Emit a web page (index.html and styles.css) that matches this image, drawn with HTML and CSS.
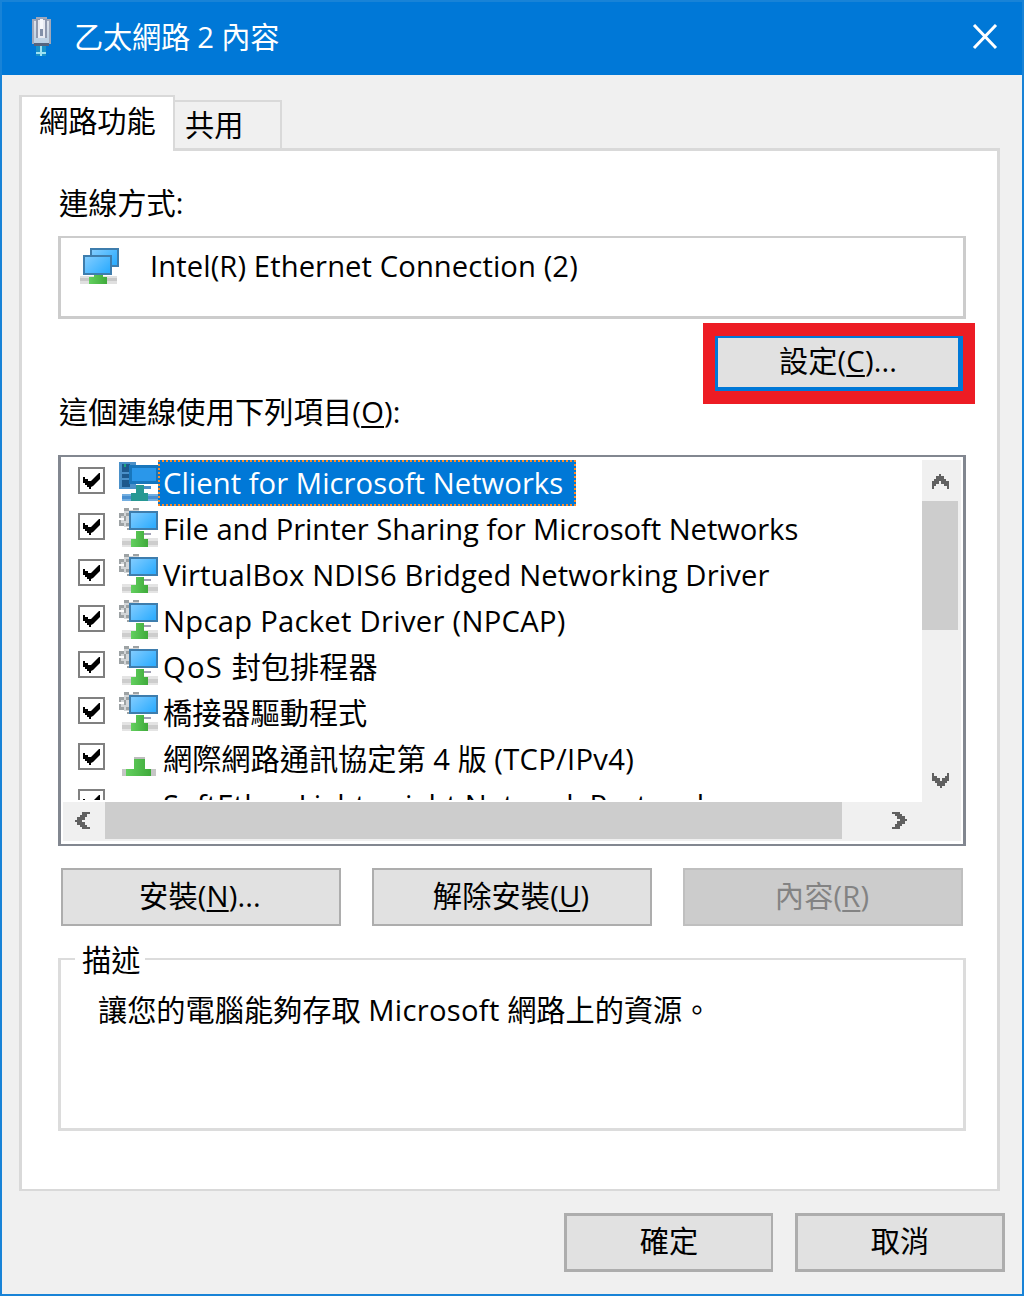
FILE: index.html
```html
<!DOCTYPE html>
<html lang="zh-Hant">
<head>
<meta charset="utf-8">
<title>乙太網路 2 內容</title>
<link rel="stylesheet" href="styles.css">
</head>
<body>
<svg class="defs" aria-hidden="true">
  <defs>
    <linearGradient id="screen" x1="0" y1="0" x2="1" y2="0.7">
      <stop offset="0" stop-color="#86ceff"/><stop offset="1" stop-color="#2fadff"/>
    </linearGradient>
    <linearGradient id="green" x1="0" y1="0" x2="1" y2="0">
      <stop offset="0" stop-color="#63d05f"/><stop offset="1" stop-color="#3faa3b"/>
    </linearGradient>
    <linearGradient id="plug" x1="0" y1="0" x2="0" y2="1">
      <stop offset="0" stop-color="#dde1ea"/><stop offset="1" stop-color="#b8cfe4"/>
    </linearGradient>
    <symbol id="check" viewBox="0 0 27 27">
      <path fill="#fff" stroke="#808080" stroke-width="2" d="M1 1h25v25H1z"/>
      <path d="M5 10h2v2h3v2h3l2-2 2-2 2-2 2-2h1v6l-2 2-2 2-3 3-2 1v2h-2v-2H9v-2H7v-2H5z"/>
    </symbol>
    <symbol id="service" viewBox="0 0 39 39">
      <path fill="#d3d6d8" d="M5 2h15v4h-9v13H5v-3H2v-4h3v-2H2V6h3z"/>
      <path fill="#9da2a4" d="M5 0h5v3H5zM14 0h6v2h-6zM0 5h5v3H2v2H0zM7 5h3v3H7zM0 12h2v3h3v3H0zM5 8h2v5H5zM7 15h3v3H7zM8 20h3v2H8z"/>
      <path fill="#e4e4e4" d="M3 30h36v9H3z"/>
      <path fill="#cdcdcd" d="M3 33h36v4H3z"/>
      <path fill="#a0a0b4" d="M17 25h15v2H17z"/>
      <path fill="url(#green)" d="M17 23h8v8h4v8H12v-8h5z"/>
      <path fill="url(#screen)" stroke="#3e7dad" stroke-width="2" d="M11 4h27v17H11z"/>
    </symbol>
    <symbol id="client" viewBox="0 0 39 39">
      <path fill="#4a90c9" d="M0 0h17v24h15v3H0z"/>
      <path fill="#1d588c" d="M3 2h8v8H3zM3 12h8v4H3zM3 18h8v7H3z"/>
      <path fill="#19a77d" d="M5 2h2v3H5z"/>
      <path fill="#72aee0" d="M3 32h36v7H3z"/>
      <path fill="#498fd0" d="M3 34h36v3H3z"/>
      <path fill="#279893" d="M17 23h8v8h4v8H12v-8h5z"/>
      <path fill="#2a97ea" stroke="#1876bc" stroke-width="3" d="M11 4h27v16H11z"/>
    </symbol>
    <symbol id="protocol" viewBox="0 0 39 39">
      <path fill="#c6c6c6" d="M3 31h34v7H3z"/>
      <path fill="#bcbcbc" d="M15 19h11v3H15z"/>
      <path fill="url(#green)" d="M15 21h11v10h6v7H7v-7h8z"/>
    </symbol>
    <symbol id="adapter" viewBox="0 0 40 38">
      <path fill="#e0e0e0" d="M0 28h37v8H0z"/>
      <path fill="#c8c8c8" d="M0 30h37v3H0z"/>
      <path fill="url(#green)" d="M9 29h5v-3h9v3h4v7H9z"/>
      <path fill="url(#screen)" stroke="#3e7dad" stroke-width="2" d="M11 1h27v17H11z"/>
      <path fill="url(#screen)" stroke="#3e7dad" stroke-width="2" d="M4 8h27v18H4z"/>
    </symbol>
    <symbol id="chevron" viewBox="0 0 17 15">
      <path fill="#606060" d="M7 0h2v2h3v3h2v2h3v8h-2v-3h-3v-2H9V7H7v3H4v2H2v3H0V7h2V5h2V2h3z"/>
    </symbol>
  </defs>
</svg>
<main class="dialog">
  <header class="titlebar">
    <svg class="title-icon" viewBox="0 0 19 39" shape-rendering="crispEdges">
      <path fill="#a0a8bb" d="M4 0h11v2h4v25H0V2h4z"/>
      <path fill="#56657f" d="M2 26h15v3H2z"/>
      <path fill="url(#plug)" d="M2 4h15v22H2z"/>
      <path fill="#8e98ae" d="M4 2h11v19H4z"/>
      <path fill="#e7eaf2" d="M6 3h7v18H6z"/>
      <path fill="#8290a9" d="M8 9h3v10H8z"/>
      <path fill="#f5f7fb" d="M8 2h3v10H8z"/>
      <path fill="#1b91c7" d="M4 29h10v10H4z"/>
      <path fill="#9ee2f3" d="M8 29h2v10H8zM4 35h10v2H4z"/>
    </svg>
    <h1 class="title">乙太網路 2 內容</h1>
    <svg class="close" viewBox="0 0 26 26"><path d="M2 1l22 23M24 1L2 24"/></svg>
  </header>
  <div class="body">
    <nav class="tabs">
      <div class="tab active">網路功能</div>
      <div class="tab">共用</div>
    </nav>
    <section class="panel">
      <div class="label connect">連線方式:</div>
      <div class="adapter-box">
        <svg class="adapter-icon" shape-rendering="crispEdges"><use href="#adapter"/></svg>
        <span class="adapter-name">Intel(R) Ethernet Connection (2)</span>
      </div>
      <div class="highlight"><button class="btn focused">設定(<u>C</u>)...</button></div>
      <div class="label uses">這個連線使用下列項目(<u>O</u>):</div>
      <div class="list">
        <div class="rows">
          <div class="row selected"><svg class="check"><use href="#check"/></svg><svg class="icon" shape-rendering="crispEdges"><use href="#client"/></svg><span class="name">Client for Microsoft Networks</span></div>
          <div class="row"><svg class="check"><use href="#check"/></svg><svg class="icon" shape-rendering="crispEdges"><use href="#service"/></svg><span class="name tight">File and Printer Sharing for Microsoft Networks</span></div>
          <div class="row"><svg class="check"><use href="#check"/></svg><svg class="icon" shape-rendering="crispEdges"><use href="#service"/></svg><span class="name wide">VirtualBox NDIS6 Bridged Networking Driver</span></div>
          <div class="row"><svg class="check"><use href="#check"/></svg><svg class="icon" shape-rendering="crispEdges"><use href="#service"/></svg><span class="name wider">Npcap Packet Driver (NPCAP)</span></div>
          <div class="row"><svg class="check"><use href="#check"/></svg><svg class="icon" shape-rendering="crispEdges"><use href="#service"/></svg><span class="name"><span class="widest">QoS </span>封包排程器</span></div>
          <div class="row"><svg class="check"><use href="#check"/></svg><svg class="icon" shape-rendering="crispEdges"><use href="#service"/></svg><span class="name">橋接器驅動程式</span></div>
          <div class="row"><svg class="check"><use href="#check"/></svg><svg class="icon" shape-rendering="crispEdges"><use href="#protocol"/></svg><span class="name">網際網路通訊協定第 4 版 <span class="wider">(TCP/IPv4)</span></span></div>
          <div class="row"><svg class="check"><use href="#check"/></svg><span class="icon"></span><span class="name wide">SoftEther Lightweight Network Protocol</span></div>
        </div>
        <div class="vscroll">
          <svg class="arrow"><use href="#chevron"/></svg>
          <div class="vthumb"></div>
          <svg class="arrow down"><use href="#chevron"/></svg>
        </div>
        <div class="hscroll">
          <svg class="arrow left"><use href="#chevron"/></svg>
          <div class="hthumb"></div>
          <svg class="arrow right"><use href="#chevron"/></svg>
        </div>
      </div>
      <div class="actions">
        <button class="btn">安裝(<u>N</u>)...</button>
        <button class="btn">解除安裝(<u>U</u>)</button>
        <button class="btn disabled">內容(<u>R</u>)</button>
      </div>
      <fieldset class="desc">
        <legend>描述</legend>
        <p>讓您的電腦能夠存取 <span class="wider">Microsoft</span> 網路上的資源。</p>
      </fieldset>
    </section>
    <footer class="footer">
      <button class="btn ok">確定</button>
      <button class="btn">取消</button>
    </footer>
  </div>
</main>
</body>
</html>
```
FILE: styles.css
```css
* { box-sizing: border-box; }
body {
  margin: 0;
  font: 29.2px/40px "Open Sans", "Noto Sans CJK TC", sans-serif;
  color: #000;
}
.defs { display: block; width: 0; height: 0; }
u { text-decoration-thickness: 2px; text-underline-offset: 3px; }
.tight { letter-spacing: -0.07px; }
.wide { letter-spacing: 0.12px; }
.wider { letter-spacing: 0.28px; }
.widest { letter-spacing: 1.2px; }
.dialog {
  display: flex;
  flex-direction: column;
  width: 1024px;
  height: 1296px;
  border: 2px solid #1883d7;
  background: #f0f0f0;
}
.titlebar {
  display: flex;
  align-items: center;
  height: 73px;
  padding: 0 24px 4px 30px;
  background: #0078d7;
  color: #fff;
}
.title-icon { width: 19px; height: 39px; }
.title {
  margin: 1px auto 0 23px;
  font-size: inherit;
  font-weight: 400;
  letter-spacing: -0.2px;
  white-space: nowrap;
}
.close { width: 26px; height: 26px; stroke: #fff; stroke-width: 3; }
.body { padding: 20px 17px 0; }
.tabs { display: flex; align-items: flex-end; height: 53px; }
.tab {
  width: 107px;
  height: 48px;
  padding: 3px 0 0 10px;
  border: 2px solid #d9d9d9;
  border-left: 0;
  border-bottom: 0;
  white-space: nowrap;
}
.tab.active {
  z-index: 1;
  width: 156px;
  height: 56px;
  margin-bottom: -3px;
  padding: 4px 0 0 17px;
  border-left: 3px solid #d9d9d9;
  background: #fff;
}
.panel {
  height: 1043px;
  width: 981px;
  padding: 32px 31px 0 36px;
  border: solid #d9d9d9;
  border-width: 3px 3px 2px;
  background: #fff;
}
.label { padding-left: 1px; }
.adapter-box {
  display: flex;
  height: 83px;
  margin-top: 13px;
  padding: 9px 0 0 18px;
  border: solid #ccc;
  border-width: 2px 3px 3px;
}
.adapter-icon { width: 40px; height: 38px; margin: 1px 30px 0 1px; }
.adapter-name { margin-top: -1px; letter-spacing: 0.09px; }
.highlight {
  width: 272px;
  height: 81px;
  margin: 4px -9px 0 auto;
  border: solid #ed1c24;
  border-width: 13px 12px;
}
.btn {
  display: block;
  width: 280px;
  height: 58px;
  padding: 0 2px 2px 0;
  border: 2px solid #adadad;
  border-radius: 0;
  background: #e1e1e1;
  color: #000;
  font: inherit;
  letter-spacing: 0.15px;
}
.btn.focused {
  width: 248px;
  height: 55px;
  padding: 0 0 3px;
  border-color: #0078d7;
  border-width: 2px 5px 4px 3px;
}
.uses { margin-top: -12px; letter-spacing: 0.15px; }
.list {
  display: grid;
  grid-template: 342px 39px / 859px 39px;
  height: 391px;
  margin-top: 23px;
  padding: 3px 2px;
  border: solid #828790;
  border-width: 2px 3px;
}
.rows { height: 340px; padding-left: 15px; overflow: hidden; }
.row { display: flex; height: 46px; }
.check { flex: none; width: 27px; height: 27px; margin: 7px 14px 0 0; }
.icon { flex: none; width: 39px; height: 39px; margin-top: 2px; }
.name { padding: 3px 5px 0; white-space: nowrap; }
.selected .name {
  width: 418px;
  padding: 1px 3px 0;
  border: 2px dotted #ff8c28;
  background: #0078d7;
  color: #fff;
  letter-spacing: 0.05px;
}
.vscroll { display: flex; flex-direction: column; align-items: center; background: #f0f0f0; }
.arrow { flex: none; width: 17px; height: 15px; margin: 14px 2px 12px 0; }
.vthumb { align-self: flex-start; width: 36px; height: 129px; margin-bottom: 129px; background: #cdcdcd; }
.arrow.down { transform: rotate(180deg); }
.hscroll { grid-column: 1 / 3; display: flex; background: #f0f0f0; }
.arrow.left { transform: rotate(-90deg); margin: 11px 14px 0 11px; }
.hthumb { width: 737px; height: 37px; background: #cdcdcd; }
.arrow.right { transform: rotate(90deg); margin: 11px 0 0 49px; }
.actions { display: flex; gap: 31px; margin: 22px 0 0 3px; }
.btn.disabled { border-color: #bfbfbf; background: #ccc; color: #838383; }
.desc {
  height: 193px;
  margin: 12px 0 0;
  padding: 10px 0 0 37px;
  border: solid #dcdcdc;
  border-width: 2px 3px 3px;
}
.desc legend { margin-left: -23px; padding: 2px 5px 0 7px; }
.desc p { margin: 0; }
.footer { display: flex; justify-content: flex-end; gap: 22px; margin-top: 22px; }
.footer .btn { width: 210px; height: 59px; padding: 0 0 3px; border-width: 3px; }
.footer .ok { width: 209px; border-right-width: 2px; }
```
